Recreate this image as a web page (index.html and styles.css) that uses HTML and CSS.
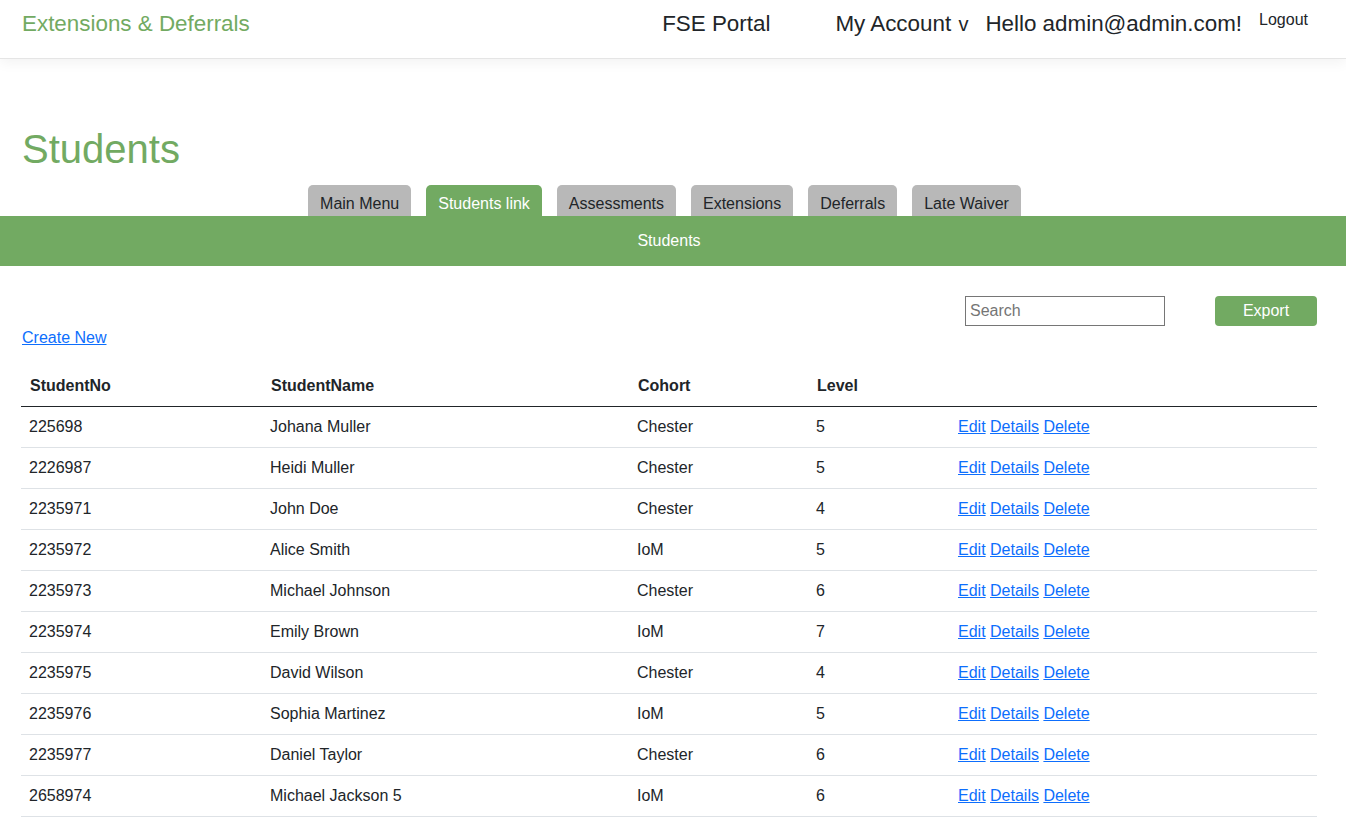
FILE: index.html
```html
<!DOCTYPE html>
<html lang="en">
<head>
<meta charset="utf-8">
<title>Students - Extensions &amp; Deferrals</title>
<link rel="stylesheet" href="styles.css">
</head>
<body>
<header class="topbar">
  <a class="brand" href="#">Extensions &amp; Deferrals</a>
  <nav class="topnav">
    <a class="nav-item portal" href="#">FSE Portal</a>
    <a class="nav-item account" href="#">My Account <span class="caret">v</span></a>
    <span class="nav-item hello">Hello admin@admin.com!</span>
    <a class="logout" href="#">Logout</a>
  </nav>
</header>

<main>
  <h1 class="page-title">Students</h1>
  <div class="tabs">
    <a class="tab" href="#">Main Menu</a>
    <a class="tab active" href="#">Students link</a>
    <a class="tab" href="#">Assessments</a>
    <a class="tab" href="#">Extensions</a>
    <a class="tab" href="#">Deferrals</a>
    <a class="tab" href="#">Late Waiver</a>
  </div>
  <div class="bar">Students</div>

  <section class="content">
    <div class="tools">
      <input class="search" type="text" placeholder="Search">
      <button class="export">Export</button>
    </div>
    <p class="create"><a href="#">Create New</a></p>

    <table class="table">
      <colgroup>
        <col class="c1"><col class="c2"><col class="c3"><col class="c4"><col class="c5">
      </colgroup>
      <thead>
        <tr><th>StudentNo</th><th>StudentName</th><th>Cohort</th><th>Level</th><th></th></tr>
      </thead>
      <tbody>
        <tr><td>225698</td><td>Johana Muller</td><td>Chester</td><td>5</td><td class="actions"><a href="#">Edit</a> <a href="#">Details</a> <a href="#">Delete</a></td></tr>
        <tr><td>2226987</td><td>Heidi Muller</td><td>Chester</td><td>5</td><td class="actions"><a href="#">Edit</a> <a href="#">Details</a> <a href="#">Delete</a></td></tr>
        <tr><td>2235971</td><td>John Doe</td><td>Chester</td><td>4</td><td class="actions"><a href="#">Edit</a> <a href="#">Details</a> <a href="#">Delete</a></td></tr>
        <tr><td>2235972</td><td>Alice Smith</td><td>IoM</td><td>5</td><td class="actions"><a href="#">Edit</a> <a href="#">Details</a> <a href="#">Delete</a></td></tr>
        <tr><td>2235973</td><td>Michael Johnson</td><td>Chester</td><td>6</td><td class="actions"><a href="#">Edit</a> <a href="#">Details</a> <a href="#">Delete</a></td></tr>
        <tr><td>2235974</td><td>Emily Brown</td><td>IoM</td><td>7</td><td class="actions"><a href="#">Edit</a> <a href="#">Details</a> <a href="#">Delete</a></td></tr>
        <tr><td>2235975</td><td>David Wilson</td><td>Chester</td><td>4</td><td class="actions"><a href="#">Edit</a> <a href="#">Details</a> <a href="#">Delete</a></td></tr>
        <tr><td>2235976</td><td>Sophia Martinez</td><td>IoM</td><td>5</td><td class="actions"><a href="#">Edit</a> <a href="#">Details</a> <a href="#">Delete</a></td></tr>
        <tr><td>2235977</td><td>Daniel Taylor</td><td>Chester</td><td>6</td><td class="actions"><a href="#">Edit</a> <a href="#">Details</a> <a href="#">Delete</a></td></tr>
        <tr><td>2658974</td><td>Michael Jackson 5</td><td>IoM</td><td>6</td><td class="actions"><a href="#">Edit</a> <a href="#">Details</a> <a href="#">Delete</a></td></tr>
      </tbody>
    </table>
  </section>
</main>
</body>
</html>
```

FILE: styles.css
```css
* { box-sizing: border-box; }

html, body {
  margin: 0;
  padding: 0;
}

body {
  font-family: "Liberation Sans", Arial, sans-serif;
  font-size: 16px;
  line-height: 1.5;
  color: #212529;
  background: #fff;
}

a { color: #0d6efd; }

.topbar {
  height: 59px;
  display: flex;
  align-items: flex-start;
  padding: 0 22px;
  border-bottom: 1px solid #e5e5e5;
  box-shadow: 0 4px 12px rgba(0, 0, 0, 0.05);
}

.brand {
  color: #72aa62;
  text-decoration: none;
  font-size: 22.4px;
  line-height: 1;
  margin-top: 13px;
}

.topnav {
  margin-left: auto;
  display: flex;
  align-items: flex-start;
  padding-right: 16px;
}

.nav-item {
  color: #212529;
  text-decoration: none;
  font-size: 22.4px;
  line-height: 1;
  margin-top: 13px;
}

.portal { margin-right: 65px; }
.account { margin-right: 17px; }
.caret { font-size: 20px; margin-left: 1px; }
.hello { margin-right: 17px; }

.logout {
  color: #212529;
  text-decoration: none;
  font-size: 16px;
  line-height: 1;
  margin-top: 12px;
}

.page-title {
  margin: 66px 0 0 22px;
  font-size: 40px;
  font-weight: normal;
  line-height: 1.2;
  color: #72aa62;
  height: 60px;
}

.tabs {
  display: flex;
  justify-content: center;
  gap: 15px;
  padding-right: 17px;
  height: 31px;
}

.tab {
  display: block;
  background: #b8b8b8;
  color: #212529;
  text-decoration: none;
  padding: 7px 12px 0;
  border-radius: 5px 5px 0 0;
  line-height: 24px;
  height: 31px;
}

.tab.active {
  background: #72aa62;
  color: #fff;
}

.bar {
  background: #72aa62;
  color: #fff;
  height: 50px;
  display: flex;
  align-items: center;
  justify-content: center;
  padding-right: 8px;
}

.content {
  padding: 0 29px 0 21px;
}

.tools {
  display: flex;
  justify-content: flex-end;
  gap: 50px;
  margin-top: 30px;
  height: 30px;
}

.search {
  width: 200px;
  height: 30px;
  border: 1px solid #767676;
  font-family: inherit;
  font-size: 16px;
  padding: 0 4px;
  color: #212529;
}

.search::placeholder { color: #757575; }

.export {
  width: 102px;
  height: 30px;
  background: #72aa62;
  color: #fff;
  border: none;
  border-radius: 4px;
  font-family: inherit;
  font-size: 16px;
}

.create {
  margin: 0 0 16px 1px;
  line-height: 24px;
}

.table {
  width: 100%;
  border-collapse: collapse;
}

.c1 { width: 241px; }
.c2 { width: 367px; }
.c3 { width: 179px; }
.c4 { width: 142px; }

.table th,
.table td {
  text-align: left;
  padding: 8px;
  line-height: 24px;
  vertical-align: top;
}

.table th {
  padding-left: 9px;
  font-weight: bold;
  border-bottom: 1px solid #212529;
}

.table td {
  border-bottom: 1px solid #dee2e6;
}
```
